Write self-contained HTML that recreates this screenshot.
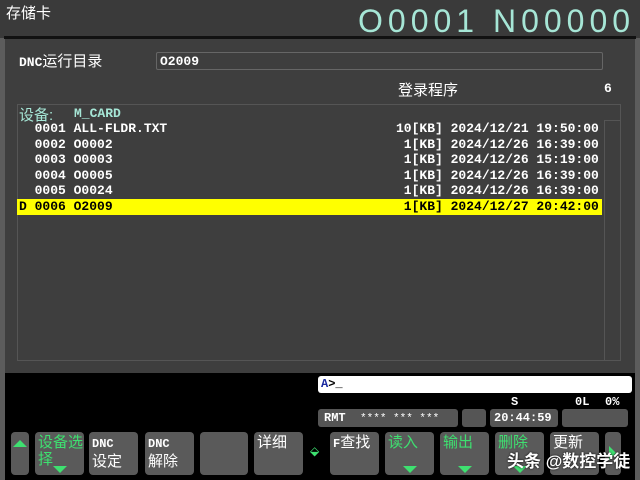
<!DOCTYPE html>
<html><head><meta charset="utf-8"><style>
*{margin:0;padding:0;box-sizing:border-box}
body{width:640px;height:480px;background:#5c5c5c;position:relative;overflow:hidden;font-family:"Liberation Sans","Noto Sans CJK SC",sans-serif;color:#fff}
.a{position:absolute;white-space:pre}
.m{font-family:"Liberation Mono","Noto Sans CJK SC",monospace;font-weight:bold;font-size:13px;line-height:15px}
.btn{position:absolute;top:432px;height:43px;background:#5a5a5a;border-radius:4px;font-size:15px;line-height:17px;padding:2px 0 0 3px}
.g{color:#3ee070}
.tri{position:absolute;bottom:2px;left:50%;margin-left:-7px;width:0;height:0;border-left:7px solid transparent;border-right:7px solid transparent;border-top:7px solid #3ee070}
.sm{font-family:"Liberation Mono",monospace;font-weight:bold;font-size:12px}
</style></head><body>
<div class="a" style="left:0;top:0;width:640px;height:38px;background:#3a3a3a"></div>
<div class="a" style="left:4px;top:36px;width:632px;height:3px;background:#111"></div>
<div class="a" style="left:6px;top:2px;font-size:15px">存储卡</div>
<div class="a" style="left:358px;top:3px;font-family:'Liberation Sans',sans-serif;font-size:32px;color:#a6e6d6;letter-spacing:5px">O0001 N00000</div>
<div class="a" style="left:5px;top:39px;width:630px;height:334px;background:#3e3e3e"></div>
<div class="a m" style="left:19px;top:54px;font-size:13px;line-height:17px">DNC<span style="font-weight:normal;font-size:15px">运行目录</span></div>
<div class="a" style="left:156px;top:52px;width:447px;height:18px;border:1px solid #666;border-radius:2px"></div>
<div class="a m" style="left:160px;top:54px">O2009</div>
<div class="a" style="left:398px;top:79px;font-size:15px">登录程序</div>
<div class="a m" style="left:604px;top:81px">6</div>
<div class="a" style="left:17px;top:104px;width:604px;height:257px;border:1px solid #555"></div>
<div class="a" style="left:604px;top:120px;width:17px;height:241px;border:1px solid #555"></div>
<div class="a" style="left:19px;top:104px;font-size:15px;color:#a6e6d6">设备:</div>
<div class="a m" style="left:74px;top:106px;color:#a6e6d6">M_CARD</div>
<div class="a" style="left:17px;top:199px;width:585px;height:16px;background:#ffff00"></div>
<div class="a m" style="left:19px;top:121px;line-height:15.6px">  0001 ALL-FLDR.TXT
  0002 O0002
  0003 O0003
  0004 O0005
  0005 O0024
<span style="color:#000">D 0006 O2009</span></div>
<div class="a m" style="left:396px;top:121px;line-height:15.6px">10[KB] 2024/12/21 19:50:00
 1[KB] 2024/12/26 16:39:00
 1[KB] 2024/12/26 15:19:00
 1[KB] 2024/12/26 16:39:00
 1[KB] 2024/12/26 16:39:00
<span style="color:#000"> 1[KB] 2024/12/27 20:42:00</span></div>
<div class="a" style="left:5px;top:373px;width:630px;height:107px;background:#000"></div>
<div class="a" style="left:318px;top:376px;width:314px;height:17px;background:#fff;border-radius:3px"></div>
<div class="a sm" style="left:321px;top:377px;color:#000"><span style="color:#1a2aa0">A</span>&gt;_</div>
<div class="a sm" style="left:511px;top:395px">S</div>
<div class="a sm" style="left:575px;top:395px">0L</div>
<div class="a sm" style="left:605px;top:395px">0%</div>
<div class="a" style="left:318px;top:409px;width:140px;height:18px;background:#555;border-radius:3px"></div>
<div class="a sm" style="left:324px;top:411px">RMT  <span style="font-weight:normal;font-size:11px">**** *** ***</span></div>
<div class="a" style="left:462px;top:409px;width:24px;height:18px;background:#555;border-radius:3px"></div>
<div class="a" style="left:490px;top:409px;width:68px;height:18px;background:#555;border-radius:3px"></div>
<div class="a sm" style="left:494px;top:411px">20:44:59</div>
<div class="a" style="left:562px;top:409px;width:66px;height:18px;background:#555;border-radius:3px"></div>
<div class="btn" style="left:11px;width:18px"><div style="position:absolute;left:2px;top:8px;border-left:7px solid transparent;border-right:7px solid transparent;border-bottom:7px solid #3ee070"></div></div>
<div class="btn g" style="left:35px;width:49px">设备选<br>择<div class="tri"></div></div>
<div class="btn" style="left:89px;width:49px"><span class="sm">DNC</span><br>设定</div>
<div class="btn" style="left:145px;width:49px"><span class="sm">DNC</span><br>解除</div>
<div class="btn" style="left:200px;width:48px"></div>
<div class="btn" style="left:254px;width:49px">详细</div>
<div class="a g" style="left:310px;top:444px;font-size:12px">⬙</div>
<div class="btn" style="left:330px;width:49px"><span class="sm">F</span>查找</div>
<div class="btn g" style="left:385px;width:49px">读入<div class="tri"></div></div>
<div class="btn g" style="left:440px;width:49px">输出<div class="tri"></div></div>
<div class="btn g" style="left:495px;width:49px">删除<div class="tri"></div></div>
<div class="btn" style="left:550px;width:49px">更新</div>
<div class="btn" style="left:605px;width:16px"><div style="position:absolute;left:4px;top:14px;border-top:7px solid transparent;border-bottom:7px solid transparent;border-left:7px solid #3ee070"></div></div>
<div class="a" style="left:507px;top:447px;font-size:17px;font-weight:bold;text-shadow:0 0 2px #000">头条 @数控学徒</div>
</body></html>
